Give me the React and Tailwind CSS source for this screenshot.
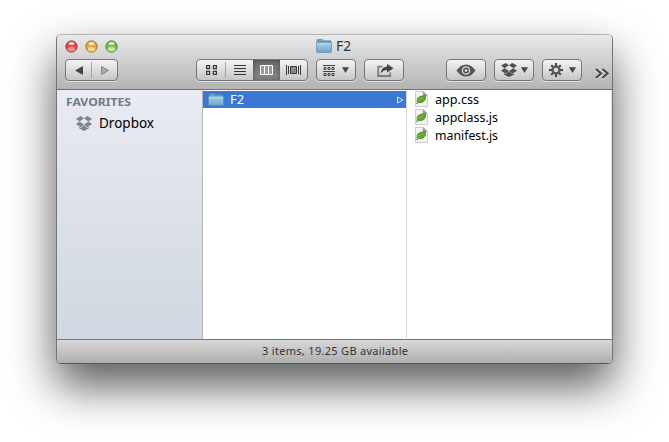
const BUTTON =
  "flex h-[22px] shrink-0 items-center overflow-hidden rounded-[4px] border border-[#777] bg-linear-to-b from-[#f4f4f4] to-[#c6c6c6] shadow-[0_1px_0_rgba(255,255,255,0.5)]";

function Folder({ className }) {
  return (
    <svg className={className} viewBox="0 0 16 14" preserveAspectRatio="none">
      <defs>
        <linearGradient id="folder" x1="0" y1="0" x2="0" y2="1">
          <stop offset="0" stopColor="#add2e6" />
          <stop offset="1" stopColor="#6fa2c1" />
        </linearGradient>
      </defs>
      <path d="M1 3V1.2Q1 .5 1.7 .5H6Q6.6 .5 6.7 1.2L7 1.8H14.3Q15 1.8 15 2.6V5H1Z" fill="#6ba1c0" stroke="#4f86a6" strokeWidth=".7" />
      <path d="M.5 3.7H15.5V12.8Q15.5 13.5 14.8 13.5H1.2Q.5 13.5 .5 12.8Z" fill="url(#folder)" stroke="#5a8fae" strokeWidth=".7" />
      <path d="M1 4.4H15" stroke="#c5e2f0" strokeWidth=".7" />
    </svg>
  );
}

function Dropbox({ className }) {
  return (
    <svg className={className} viewBox="0 0 16 15" fill="currentColor" preserveAspectRatio="none">
      <path d="M4.8 0 8 2.4 3.5 5.5 0 2.8ZM11.2 0 8 2.4 12.5 5.5 16 2.8ZM3.5 5.5 8 8.5 4.8 11.2 0 8.3ZM12.5 5.5 8 8.5 11.2 11.2 16 8.3ZM8 9.2 11.2 11.9 13 10.9V12.2L8 15 3 12.2V10.9L4.8 11.9Z" />
    </svg>
  );
}

function Caret() {
  return (
    <svg className="h-[6px] w-[7px]" viewBox="0 0 7 6">
      <path d="M0 .3H7L3.5 6Z" fill="#444" />
    </svg>
  );
}

function Light({ color, rim, glow }) {
  return (
    <svg className="size-[13px]" viewBox="0 0 13 13">
      <circle cx="6.5" cy="6.5" r="5.6" fill={color} stroke={rim} strokeWidth="1" />
      <ellipse cx="6.5" cy="9.2" rx="3.6" ry="2.2" fill={glow} opacity=".85" />
      <ellipse cx="6.5" cy="3.4" rx="2.9" ry="1.5" fill="#fff" opacity=".8" />
    </svg>
  );
}

function GridIcon() {
  return (
    <svg className="h-[10px] w-[11px]" viewBox="0 0 11 10" fill="#ddd" stroke="#3a3a3a" strokeWidth="1.2">
      <path d="M.6 .6h3v3h-3zM7.4 .6h3v3h-3zM.6 6.4h3v3h-3zM7.4 6.4h3v3h-3z" />
    </svg>
  );
}

function ListIcon() {
  return (
    <svg className="h-[10px] w-[12px]" viewBox="0 0 12 10" stroke="#333" strokeWidth="1.1">
      <path d="M0 .5H12M0 3.5H12M0 6.5H12M0 9.5H12" />
    </svg>
  );
}

function ColumnsIcon() {
  return (
    <svg className="h-[10px] w-[13px]" viewBox="0 0 13 10" fill="#999" stroke="#fff">
      <path d="M.5 .5H12.5V9.5H.5ZM4.5 0V10M8.5 0V10" />
    </svg>
  );
}

function FlowIcon() {
  return (
    <svg className="h-[10px] w-[15px]" viewBox="0 0 15 10" stroke="#3a3a3a">
      <path d="M.5 0V10M2.5 1V9M12.5 1V9M14.5 0V10" fill="none" />
      <path d="M4.5 1.5h6v7h-6z" fill="#8b8b8b" />
    </svg>
  );
}

function ArrangeIcon() {
  return (
    <svg className="mt-px h-[11px] w-[12px]" viewBox="0 0 12 11" fill="none" stroke="#333">
      <path d="M0 .5H12M0 6.5H12" strokeWidth=".9" />
      <path d="M1 2.5h2v2H1zM5 2.5h2v2H5zM9 2.5h2v2H9zM1 8.5h2v2H1zM5 8.5h2v2H5zM9 8.5h2v2H9z" strokeWidth=".9" />
    </svg>
  );
}

function ShareIcon() {
  return (
    <svg className="ml-[2px] h-[13px] w-[17px]" viewBox="0 0 17 13">
      <path d="M5.5 2.7H1.2V12H13.2V8.5" fill="none" stroke="#7b7b7b" strokeWidth="1.8" />
      <path d="M10 0 16.5 4.3 10 8.4V6Q6 6 3.8 9.6 4 3 10 2.5Z" fill="#444" />
    </svg>
  );
}

function EyeIcon() {
  return (
    <svg className="h-[13px] w-[20px]" viewBox="0 0 20 13">
      <path d="M.5 6.5Q4.5 .5 10 .5T19.5 6.5Q15.5 12.5 10 12.5T.5 6.5Z" fill="#555" />
      <circle cx="10" cy="6.5" r="3.6" fill="#505050" stroke="#dcdcdc" strokeWidth="1.3" />
      <circle cx="10" cy="6.5" r="1.3" fill="#f0f0f0" />
    </svg>
  );
}

function GearIcon() {
  return (
    <svg className="size-[14px]" viewBox="-7 -7 14 14" stroke="#444">
      <path d="M0-7V-4M0 7V4M-7 0H-4M7 0H4M-4.8-4.8-3-3M4.8 4.8 3 3M-4.8 4.8-3 3M4.8-4.8 3-3" strokeWidth="2" />
      <circle r="3.5" fill="none" stroke="#5a5a5a" strokeWidth="2.5" />
    </svg>
  );
}

function LeafFile() {
  return (
    <svg className="h-[16px] w-[13px]" viewBox="0 0 13 16">
      <path d="M.5 .5H8.5L12.5 4.5V15.5H.5Z" fill="#f2f2f2" stroke="#c3c3c3" strokeWidth=".8" />
      <path d="M8 .5V4.5H12.5Z" fill="#999" stroke="#aaa" strokeWidth=".5" />
      <path d="M2.3 11.5Q1.3 7.3 4.5 5.8 7 4.7 10.6 4.6 11 9 8.3 10.8 5.5 12.3 3.2 11.3L1.6 13Z" fill="#60aa26" stroke="#467f20" strokeWidth=".7" />
      <path d="M3.6 9.6Q4.5 7.5 7.5 6.3" fill="none" stroke="#7fc93c" strokeWidth="1" />
    </svg>
  );
}

function FileRow({ name, width }) {
  return (
    <div className="flex h-[18px] items-center gap-[7px] pl-[8px]">
      <LeafFile />
      <svg className="h-[18px] w-[100px]" fill="#000">
        <text x="0" y="14" fontSize="13" textLength={width} lengthAdjust="spacingAndGlyphs">{name}</text>
      </svg>
    </div>
  );
}

export default function App() {
  return (
    <div className="h-[442px] w-[669px] overflow-hidden bg-white pt-[34px] pl-[56px] font-['Noto_Sans','Open_Sans',sans-serif]">
      <div className="flex h-[330px] w-[557px] flex-col overflow-hidden rounded-[5px] border border-[#747474] border-t-[#b5b5b5] border-b-[#555] bg-white shadow-[0_22px_46px_rgba(0,0,0,0.66)]">
        <header className="h-[55px] shrink-0 border-b border-[#707070] bg-linear-to-b from-[#e9e9e9] to-[#b4b4b4]">
          <div className="flex h-[24px] items-start">
            <div className="flex w-[259px] gap-[7px] pt-[5px] pl-[8px]">
              <Light color="#e2474b" rim="#963438" glow="#ff9c98" />
              <Light color="#e9a440" rim="#9c6a2b" glow="#ffe18b" />
              <Light color="#79bd55" rim="#4c7c37" glow="#c6f59e" />
            </div>
            <Folder className="mt-[4px] h-[14px] w-[16px]" />
            <svg className="mt-px ml-[4px] h-[20px] w-[20px]" fill="#333">
              <text x="0" y="15" fontSize="13.5" textLength="15" lengthAdjust="spacingAndGlyphs">F2</text>
            </svg>
          </div>
          <div className="flex h-[22px] pl-[8px]">
            <div className={BUTTON + " w-[53px]"}>
              <div className="flex h-full w-[25px] items-center justify-center">
                <svg className="h-[9px] w-[8px]" viewBox="0 0 8 9"><path d="M8 0V9L0 4.5Z" fill="#444" /></svg>
              </div>
              <div className="h-[16px] w-px bg-[#a3a3a3]" />
              <div className="flex flex-1 justify-center">
                <svg className="h-[9px] w-[8px]" viewBox="0 0 8 9"><path d="M.5 .5V8.5L7.5 4.5Z" fill="#aaa" stroke="#858585" /></svg>
              </div>
            </div>
            <div className={BUTTON + " ml-[78px] w-[112px]"}>
              <div className="flex h-full w-[28px] items-center justify-center"><GridIcon /></div>
              <div className="h-[16px] w-px bg-[#a3a3a3]" />
              <div className="flex w-[27px] justify-center"><ListIcon /></div>
              <div className="flex h-full w-[27px] items-center justify-center bg-linear-to-b from-[#686868] to-[#898989] shadow-[inset_0_0_4px_rgba(0,0,0,0.35)]"><ColumnsIcon /></div>
              <div className="flex flex-1 justify-center"><FlowIcon /></div>
            </div>
            <div className={BUTTON + " ml-[8px] w-[40px] justify-center gap-[7px]"}><ArrangeIcon /><Caret /></div>
            <div className={BUTTON + " ml-[8px] w-[40px] justify-center"}><ShareIcon /></div>
            <div className={BUTTON + " ml-[42px] w-[40px] justify-center"}><EyeIcon /></div>
            <div className={BUTTON + " ml-[8px] w-[40px] justify-center gap-[4px]"}>
              <Dropbox className="h-[14px] w-[16px] text-[#505050]" /><Caret />
            </div>
            <div className={BUTTON + " ml-[8px] w-[40px] justify-center gap-[6px]"}><GearIcon /><Caret /></div>
            <svg className="mt-[9px] ml-[13px] h-[12px] w-[14px]" viewBox="0 0 14 12" fill="none">
              <path d="M1 2 6 6.5 1 11M7.5 2 12.5 6.5 7.5 11" stroke="#eee" strokeWidth="2" />
              <path d="M1 1 6 5.5 1 10M7.5 1 12.5 5.5 7.5 10" stroke="#484848" strokeWidth="2.2" />
            </svg>
          </div>
        </header>
        <main className="flex min-h-0 flex-1">
          <aside className="w-[146px] border-r border-[#b5b7ba] bg-linear-to-b from-[#e8ebf1] to-[#d0d7e0]">
            <svg className="mt-[2px] h-[20px] w-[140px]" fill="#6e7b8a">
              <text x="9" y="14" fontSize="11" fontWeight="700" textLength="65" lengthAdjust="spacingAndGlyphs">FAVORITES</text>
            </svg>
            <div className="flex h-[22px] items-center gap-[7px] pl-[19px]">
              <Dropbox className="h-[15px] w-[16px] text-[#7b8490]" />
              <svg className="h-[22px] w-[80px]" fill="#000">
                <text x="0" y="16" fontSize="13.5" textLength="55" lengthAdjust="spacingAndGlyphs">Dropbox</text>
              </svg>
            </div>
          </aside>
          <section className="w-[204px] border-r border-[#d8d8d8] pt-px">
            <div className="flex h-[17px] items-center bg-[#3b78d6] pl-[5px]">
              <Folder className="h-[13px] w-[16px]" />
              <svg className="ml-[6px] h-[17px] w-[20px]" fill="#fff">
                <text x="0" y="13" fontSize="12.5" textLength="14" lengthAdjust="spacingAndGlyphs">F2</text>
              </svg>
              <svg className="ml-auto mr-[2px] h-[8px] w-[8px]" viewBox="0 0 8 8"><path d="M1.5 1V7L7 4Z" fill="none" stroke="#d9e7ff" /></svg>
            </div>
          </section>
          <section className="flex-1 border-r border-[#e5e5e5]">
            <FileRow name="app.css" width={44} />
            <FileRow name="appclass.js" width={63} />
            <FileRow name="manifest.js" width={63} />
          </section>
        </main>
        <footer className="flex h-[24px] shrink-0 justify-center border-t border-[#777] bg-linear-to-b from-[#d8d8d8] to-[#afafaf]">
          <svg className="h-[23px] w-[146px]" fill="#333">
            <text x="0" y="15" fontSize="11" textLength="146">3 items, 19.25 GB available</text>
          </svg>
        </footer>
      </div>
    </div>
  );
}
